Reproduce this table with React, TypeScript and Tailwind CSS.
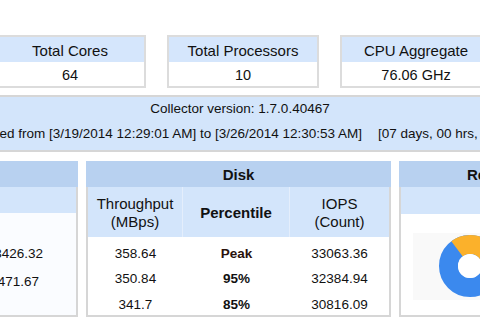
import React from "react";

function StatCard({ title, value }: { title: string; value: string }) {
  return (
    <div className="w-[152px] shrink-0 border-2 border-[#dcdcdc] bg-white">
      <div className="h-[25px] bg-[#d5e6fc] flex items-center justify-center text-[15px] pt-[3px]">{title}</div>
      <div className="h-[24px] flex items-center justify-center text-[14.5px] pt-[3px]">{value}</div>
    </div>
  );
}

export default function App() {
  const C = 2 * Math.PI * 21.5;
  const orange = (126 / 360) * C;
  return (
    <div className="w-[480px] h-[324px] overflow-hidden bg-white font-['Liberation_Sans',Arial,sans-serif] text-[#111111] pt-[35px]">
      <div className="flex gap-[21px] ml-[-6px]">
        <StatCard title="Total Cores" value="64" />
        <StatCard title="Total Processors" value="10" />
        <StatCard title="CPU Aggregate" value="76.06 GHz" />
      </div>

      <div className="mt-[7px] ml-[-10px] w-[500px] h-[57px] border-2 border-[#d6d6d6] bg-[#d3e5fb] text-[13.5px] overflow-hidden">
        <div className="h-[20px] leading-[20px] text-center pt-[2px] box-content">Collector version: 1.7.0.40467</div>
        <div className="mt-[1px] h-[26px] leading-[26px] whitespace-nowrap ml-[-63px] flex pt-[1px] box-content">
          <span>Data collected from [3/19/2014 12:29:01 AM] to [3/26/2014 12:30:53 AM]</span>
          <span className="ml-[16px]">[07 days, 00 hrs, 01 mins]</span>
        </div>
      </div>

      <div className="mt-[9px] flex gap-[8px] ml-[-42px]">
        {/* Left panel */}
        <div className="w-[120px] shrink-0 flex flex-col">
          <div className="h-[26px] bg-[#b8d1f0]" />
          <div className="border-x-2 border-b-2 border-[#d6d6d6] h-[130px] bg-[#fafcff] flex flex-col overflow-hidden">
            <div className="h-[26px] shrink-0 bg-[#d3e5fb]" />
            <div className="pt-[27px] text-[13.5px]">
              <div className="h-[28px] leading-[28px] text-right pr-[33px]">33426.32</div>
              <div className="h-[28px] leading-[28px] text-right pr-[37px]">14471.67</div>
            </div>
          </div>
        </div>

        {/* Disk panel */}
        <div className="w-[305px] shrink-0 flex flex-col">
          <div className="h-[26px] bg-[#b8d1f0] flex items-center justify-center font-bold text-[15px] pt-[2px]">Disk</div>
          <div className="border-x-2 border-b-2 border-[#d6d6d6] h-[130px] bg-white overflow-hidden">
            <div className="h-[50px] bg-[#d3e5fb] grid grid-cols-[95px_107px_1fr] text-[15px] leading-[18px]">
              <div className="flex items-center justify-center text-center border-r border-[#e4eefc] pt-[2px]">
                Throughput<br />(MBps)
              </div>
              <div className="flex items-center justify-center font-bold border-r border-[#e4eefc] pt-[2px]">Percentile</div>
              <div className="flex items-center justify-center text-center pt-[2px]">
                IOPS<br />(Count)
              </div>
            </div>
            <div className="pt-[4px] text-[13.5px]">
              {[
                ["358.64", "Peak", "33063.36"],
                ["350.84", "95%", "32384.94"],
                ["341.7", "85%", "30816.09"],
              ].map((r, i) => (
                <div key={i} className="h-[25.5px] grid grid-cols-[95px_107px_1fr] items-center text-center">
                  <div>{r[0]}</div>
                  <div className={"font-bold " + (i === 0 ? "text-[#2a120c]" : "")}>{r[1]}</div>
                  <div>{r[2]}</div>
                </div>
              ))}
            </div>
          </div>
        </div>

        {/* Right panel */}
        <div className="w-[200px] shrink-0 flex flex-col">
          <div className="h-[26px] bg-[#b8d1f0] flex items-center pl-[68px] font-bold text-[15px] whitespace-nowrap pt-[2px]">Resources</div>
          <div className="border-x-2 border-b-2 border-[#d6d6d6] h-[130px] bg-white">
            <div className="h-[27px] bg-[#d3e5fb]" />
            <div className="mt-[19px] ml-[12px] w-[170px] h-[67px] bg-[#f9f9f9]">
              <svg width="170" height="67" viewBox="0 0 170 67">
                <circle cx="57" cy="33" r="21.5" fill="none" stroke="#3b89ee" strokeWidth="19" />
                <circle
                  cx="57"
                  cy="33"
                  r="21.5"
                  fill="none"
                  stroke="#fbb12b"
                  strokeWidth="19"
                  strokeDasharray={`${orange} ${C}`}
                  transform="rotate(-127 57 33)"
                />
                <circle cx="57" cy="33" r="12" fill="#ffffff" />
              </svg>
            </div>
          </div>
        </div>
      </div>
    </div>
  );
}
